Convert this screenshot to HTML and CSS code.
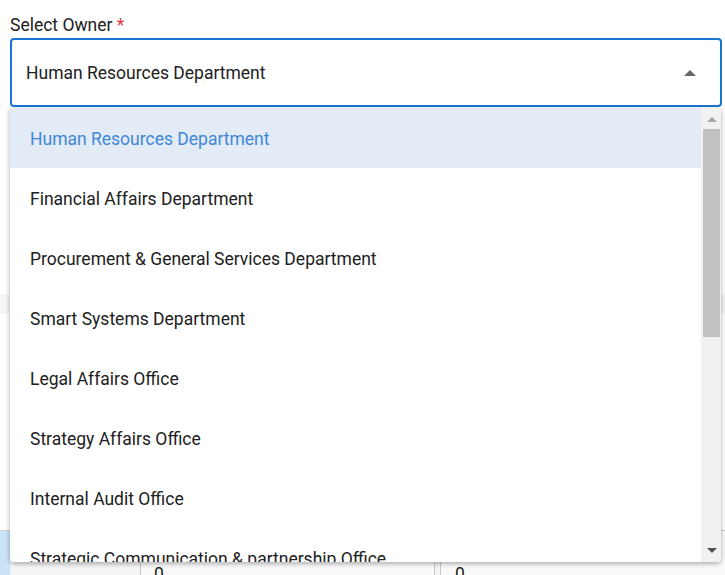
FILE: index.html
```html
<!DOCTYPE html>
<html>
<head>
<meta charset="utf-8">
<link rel="stylesheet" href="styles.css">
</head>
<body>
<div class="page">
  <label class="field-label">Select Owner <span class="req">*</span></label>
  <div class="select-wrap">
    <div class="select">
      <span class="select-value">Human Resources Department</span>
      <svg class="caret" width="12" height="6" viewBox="0 0 12 6"><path d="M0 6 L6 0 L12 6 Z" fill="#666"/></svg>
    </div>
    <div class="menu">
      <ul class="options">
        <li class="option selected">Human Resources Department</li>
        <li class="option">Financial Affairs Department</li>
        <li class="option">Procurement &amp; General Services Department</li>
        <li class="option">Smart Systems Department</li>
        <li class="option">Legal Affairs Office</li>
        <li class="option">Strategy Affairs Office</li>
        <li class="option">Internal Audit Office</li>
        <li class="option">Strategic Communication &amp; partnership Office</li>
      </ul>
      <div class="scrollbar">
        <svg class="sb-arrow" width="10" height="5" viewBox="0 0 10 5"><path d="M0 5 L5 0 L10 5 Z" fill="#a3a3a3"/></svg>
        <div class="sb-track"><div class="sb-thumb"></div></div>
        <svg class="sb-arrow" width="10" height="5" viewBox="0 0 10 5"><path d="M0 0 L5 5 L10 0 Z" fill="#505050"/></svg>
      </div>
    </div>
  </div>
  <div class="band"></div>
  <div class="row">
    <div class="row-mark"></div>
    <div class="row-label"></div>
    <div class="cell cell-1">0</div>
    <div class="cell cell-2">0</div>
  </div>
</div>
</body>
</html>
```

FILE: styles.css
```css
* { box-sizing: border-box; }
html, body { margin: 0; padding: 0; background: #fff; }
body {
  font-family: Roboto, "Noto Sans", "Liberation Sans", sans-serif;
  font-size: 17.5px;
  color: #212121;
  width: 725px;
  height: 575px;
  overflow: hidden;
}
.page { padding-top: 15px; }
.field-label {
  display: block;
  margin-left: 10px;
  line-height: 21px;
  margin-bottom: 2px;
  color: #212121;
}
.req { color: #e53935; }
.select-wrap {
  position: relative;
  margin-left: 10px;
  width: 712px;
}
.select {
  height: 69px;
  border: 2px solid #1976d2;
  border-radius: 4px;
  display: flex;
  align-items: center;
  justify-content: space-between;
  padding: 2px 24px 0 14px;
}
.select-value { line-height: 21px; color: #212121; }
.caret { display: block; margin-top: -1px; }
.menu {
  position: absolute;
  top: 70px;
  left: 0;
  width: 711px;
  height: 454px;
  background: #fff;
  display: flex;
  border-radius: 0 0 4px 4px;
  overflow: hidden;
  box-shadow: 0 2px 4px rgba(0,0,0,0.22), 0 1px 6px rgba(0,0,0,0.12);
  z-index: 5;
}
.options {
  list-style: none;
  margin: 0;
  padding: 0;
  flex: 1;
  overflow: hidden;
}
.option {
  height: 60px;
  display: flex;
  align-items: center;
  padding: 2px 0 0 20px;
  white-space: nowrap;
  color: #212121;
  line-height: 21px;
}
.option.selected {
  background: #e2ebf6;
  color: #3f87d8;
}
.scrollbar {
  width: 20px;
  background: #f1f1f1;
  display: flex;
  flex-direction: column;
  align-items: center;
  padding: 9px 0 9px 0;
}
.sb-arrow { display: block; margin-left: 1px; }
.sb-track {
  flex: 1;
  width: 100%;
  padding: 7px 1px 0 2px;
}
.sb-thumb {
  height: 208px;
  background: #c1c1c1;
}
.band {
  margin-top: 187px;
  height: 20px;
  background: #f5f5f5;
}
.row {
  margin-top: 216px;
  height: 60px;
  display: flex;
  border-top: 1px solid #d0d0d0;
  background: #f5f5f5;
}
.row-mark { width: 10px; background: #c9e3f8; }
.row-label { width: 131px; border-right: 1px solid #c8c8c8; }
.cell {
  padding: 33px 0 0 13px;
  line-height: 21px;
  background: #fafafa;
  color: #212121;
}
.cell-1 {
  width: 294px;
  border-right: 1px solid #c8c8c8;
}
.cell-2 {
  flex: 1;
  border-left: 1px solid #c8c8c8;
  margin-left: 5px;
  padding-left: 14px;
}
```
